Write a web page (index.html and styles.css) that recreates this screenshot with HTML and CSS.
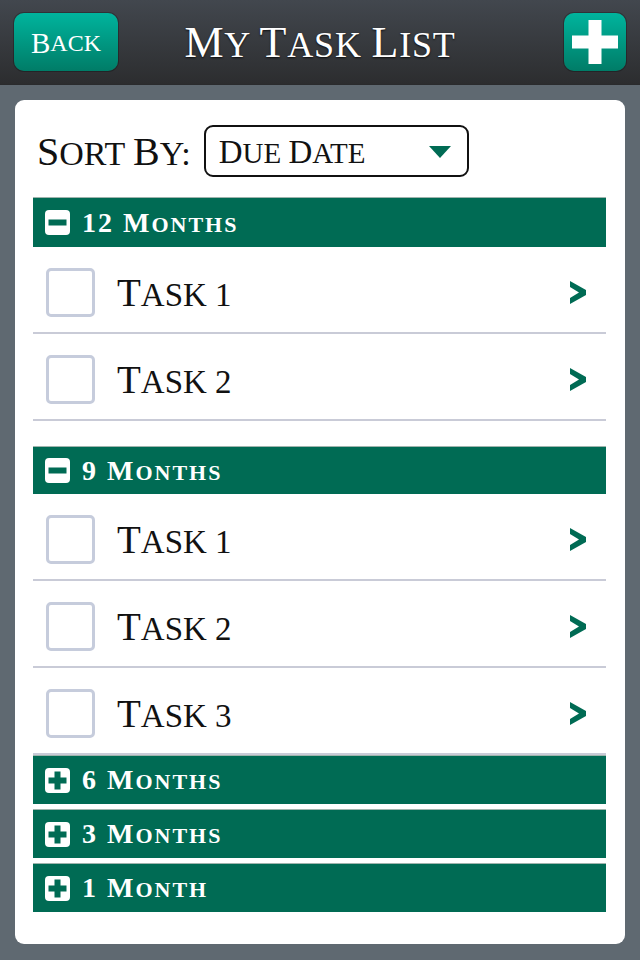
FILE: index.html
```html
<!DOCTYPE html>
<html>
<head>
<meta charset="utf-8">
<link rel="stylesheet" href="styles.css">
</head>
<body>
<header class="topbar">
  <div class="btn back"><span class="ini">B</span>ack</div>
  <h1 class="title"><span class="ini">M</span>y <span class="ini">T</span>ask <span class="ini">L</span>ist</h1>
  <div class="btn add">
    <svg width="46" height="44" viewBox="0 0 46 44"><rect x="16.5" y="0" width="13" height="44" fill="#fff"/><rect x="0" y="15.5" width="46" height="13" fill="#fff"/></svg>
  </div>
</header>
<main class="card">
  <div class="sort">
    <span class="sort-label"><span class="ini">S</span>ort <span class="ini">B</span>y:</span>
    <div class="select">
      <span><span class="ini">D</span>ue <span class="ini">D</span>ate</span>
      <svg width="22" height="12" viewBox="0 0 22 12"><polygon points="0,0 22,0 11,12" fill="#006b54"/></svg>
    </div>
  </div>

  <section class="group first">
    <div class="sec">
      <svg class="sec-icon" width="25" height="25" viewBox="0 0 25 25"><rect width="25" height="25" rx="4" fill="#fff"/><rect x="3.5" y="9.5" width="18" height="6" fill="#006b54"/></svg>
      <span><span class="ini">12 M</span>onths</span>
    </div>
    <div class="task">
      <span class="check"></span>
      <span class="task-name"><span class="ini">T</span>ask 1</span>
      <svg class="chev" width="16" height="23" viewBox="0 0 16 23"><polygon points="0,0 16,9 16,14 0,23 0,17 9,11.5 0,6" fill="#006b54"/></svg>
    </div>
    <div class="task">
      <span class="check"></span>
      <span class="task-name"><span class="ini">T</span>ask 2</span>
      <svg class="chev" width="16" height="23" viewBox="0 0 16 23"><polygon points="0,0 16,9 16,14 0,23 0,17 9,11.5 0,6" fill="#006b54"/></svg>
    </div>
  </section>

  <section class="group">
    <div class="sec">
      <svg class="sec-icon" width="25" height="25" viewBox="0 0 25 25"><rect width="25" height="25" rx="4" fill="#fff"/><rect x="3.5" y="9.5" width="18" height="6" fill="#006b54"/></svg>
      <span><span class="ini">9 M</span>onths</span>
    </div>
    <div class="task">
      <span class="check"></span>
      <span class="task-name"><span class="ini">T</span>ask 1</span>
      <svg class="chev" width="16" height="23" viewBox="0 0 16 23"><polygon points="0,0 16,9 16,14 0,23 0,17 9,11.5 0,6" fill="#006b54"/></svg>
    </div>
    <div class="task">
      <span class="check"></span>
      <span class="task-name"><span class="ini">T</span>ask 2</span>
      <svg class="chev" width="16" height="23" viewBox="0 0 16 23"><polygon points="0,0 16,9 16,14 0,23 0,17 9,11.5 0,6" fill="#006b54"/></svg>
    </div>
    <div class="task">
      <span class="check"></span>
      <span class="task-name"><span class="ini">T</span>ask 3</span>
      <svg class="chev" width="16" height="23" viewBox="0 0 16 23"><polygon points="0,0 16,9 16,14 0,23 0,17 9,11.5 0,6" fill="#006b54"/></svg>
    </div>
  </section>

  <div class="collapsed">
    <div class="sec">
      <svg class="sec-icon" width="25" height="25" viewBox="0 0 25 25"><rect width="25" height="25" rx="4" fill="#fff"/><rect x="3.5" y="9.5" width="18" height="6" fill="#006b54"/><rect x="9.5" y="3.5" width="6" height="18" fill="#006b54"/></svg>
      <span><span class="ini">6 M</span>onths</span>
    </div>
    <div class="sec">
      <svg class="sec-icon" width="25" height="25" viewBox="0 0 25 25"><rect width="25" height="25" rx="4" fill="#fff"/><rect x="3.5" y="9.5" width="18" height="6" fill="#006b54"/><rect x="9.5" y="3.5" width="6" height="18" fill="#006b54"/></svg>
      <span><span class="ini">3 M</span>onths</span>
    </div>
    <div class="sec">
      <svg class="sec-icon" width="25" height="25" viewBox="0 0 25 25"><rect width="25" height="25" rx="4" fill="#fff"/><rect x="3.5" y="9.5" width="18" height="6" fill="#006b54"/><rect x="9.5" y="3.5" width="6" height="18" fill="#006b54"/></svg>
      <span><span class="ini">1 M</span>onth</span>
    </div>
  </div>
</main>
</body>
</html>
```
FILE: styles.css
```css
html, body {
  margin: 0;
  padding: 0;
}
body {
  background: #5f6971;
  font-family: "Liberation Serif", "Times New Roman", serif;
  width: 640px;
  min-height: 960px;
}
.topbar {
  height: 85px;
  box-sizing: border-box;
  background: linear-gradient(#42474e, #2c2d2f);
  border-bottom: 1px solid #2a2b2d;
  display: grid;
  grid-template-columns: 1fr auto 1fr;
  align-items: center;
  padding: 0 14px;
}
.btn {
  height: 58px;
  border-radius: 10px;
  background: linear-gradient(#00b49d, #007c67);
  box-shadow: 0 0 0 1px rgba(0, 0, 0, 0.25);
  display: flex;
  align-items: center;
  justify-content: center;
  color: #fff;
}
.back {
  width: 104px;
  justify-self: start;
  font-size: 24px;
  text-transform: uppercase;
  padding-top: 2px;
  box-sizing: border-box;
}
.back .ini {
  font-size: 29px;
}
.add {
  width: 62px;
  justify-self: end;
}
.title {
  margin: 0;
  color: #fff;
  font-weight: normal;
  font-size: 36px;
  text-transform: uppercase;
  letter-spacing: 0.8px;
  text-shadow: 0 1px 2px rgba(0, 0, 0, 0.8);
  line-height: 1;
  padding-top: 2px;
}
.title .ini {
  font-size: 44px;
}
.card {
  display: block;
  margin: 15px 15px 16px;
  background: #fff;
  border-radius: 9px;
  padding: 25px 19px 32px 18px;
}
.sort {
  display: flex;
  align-items: center;
  gap: 13px;
  padding-left: 4px;
  margin-bottom: 20px;
}
.sort-label {
  font-size: 34px;
  text-transform: uppercase;
  color: #111;
}
.sort-label .ini {
  font-size: 40px;
}
.select {
  width: 265px;
  height: 52px;
  box-sizing: border-box;
  border: 2px solid #111;
  border-radius: 9px;
  padding: 2px 16px 0 13px;
  display: flex;
  align-items: center;
  justify-content: space-between;
  font-size: 29px;
  text-transform: uppercase;
  color: #111;
}
.select .ini {
  font-size: 33px;
}
.sec {
  height: 48px;
  box-sizing: border-box;
  background: #006b54;
  border-top: 1px solid #9fb4ad;
  display: flex;
  align-items: center;
  gap: 12px;
  padding: 0 0 0 12px;
  color: #fff;
  font-weight: bold;
  font-size: 22px;
  letter-spacing: 2px;
  text-transform: uppercase;
}
.sec .ini {
  font-size: 28px;
}
.first .sec {
  height: 50px;
}
.collapsed .sec {
  height: 49px;
}
.sec-icon {
  flex: none;
}
.group.first {
  margin-bottom: 25px;
}
.task {
  height: 87px;
  box-sizing: border-box;
  border-bottom: 2px solid #c9cbd7;
  display: flex;
  align-items: center;
  padding: 5px 20px 0 13px;
}
.check {
  width: 49px;
  height: 49px;
  box-sizing: border-box;
  border: 3px solid #c6ccdc;
  border-radius: 5px;
  flex: none;
}
.task-name {
  margin-left: 22px;
  flex: 1;
  font-size: 33px;
  text-transform: uppercase;
  color: #111;
}
.task-name .ini {
  font-size: 39px;
}
.chev {
  flex: none;
}
.collapsed {
  display: flex;
  flex-direction: column;
  gap: 5px;
}
```
